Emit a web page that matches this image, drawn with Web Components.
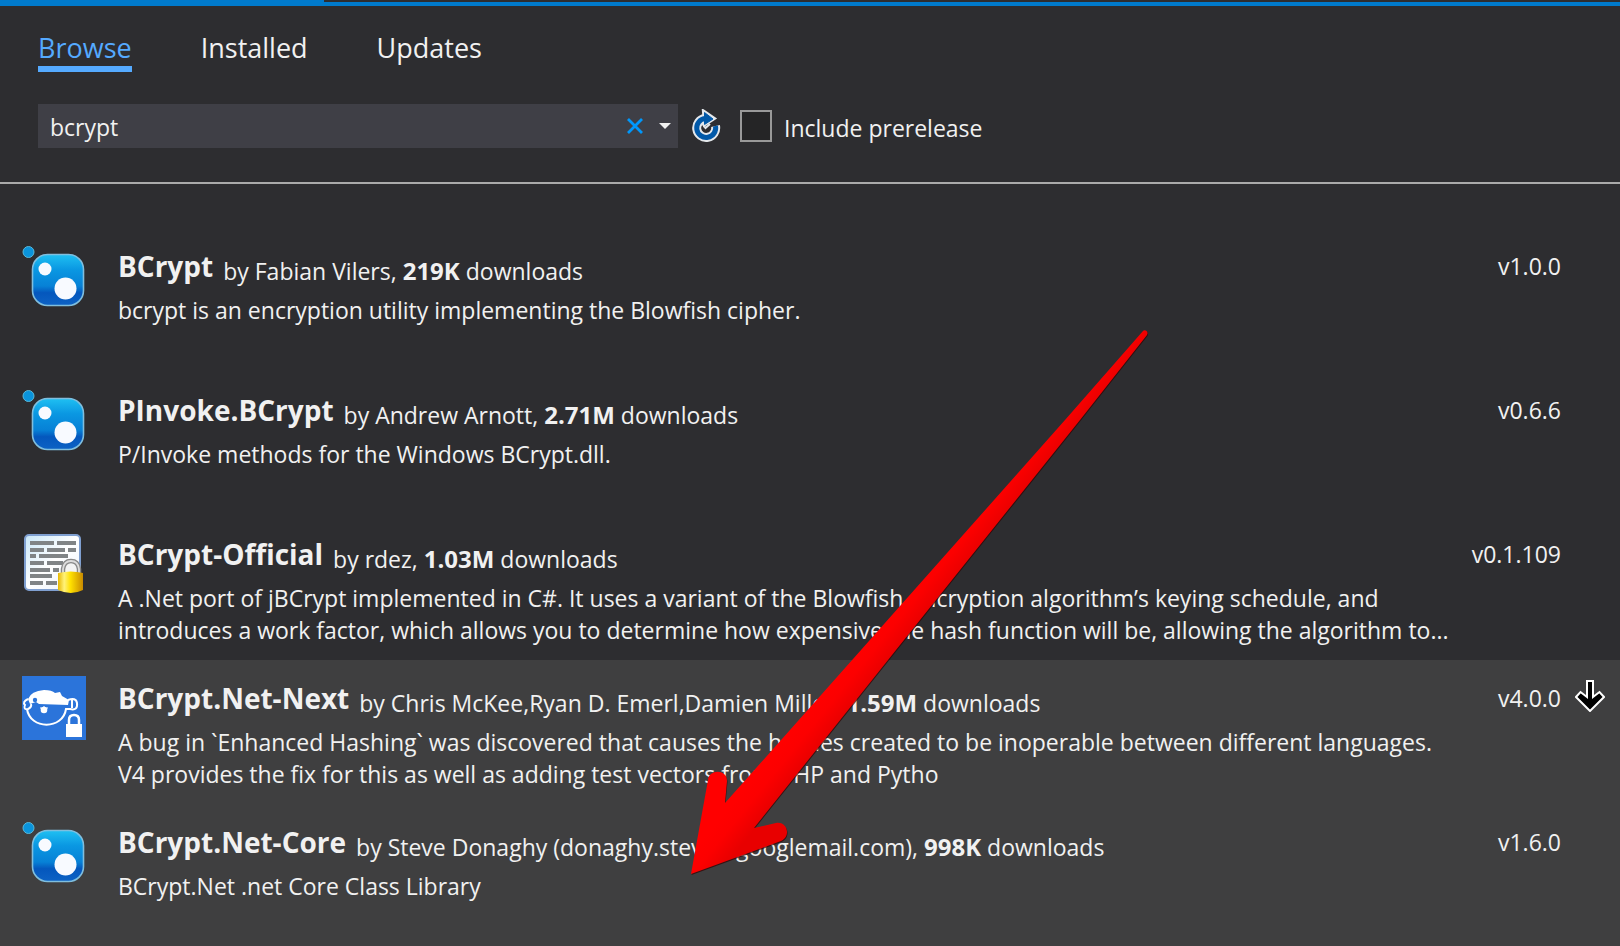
<!DOCTYPE html>
<html lang="en">
<head>
<meta charset="utf-8">
<title>NuGet Package Manager</title>
<style>
html, body { height: 100%; }
body { margin: 0; background: #2d2d30; color: #f1f1f1; font-family: "Open Sans", "Noto Sans", sans-serif; font-size: 23px; overflow: hidden; }
</style>
</head>
<body>
<package-manager></package-manager>
<pointer-arrow></pointer-arrow>
<script>
const define = (name, html, setup) => {
  const template = document.createElement('template');
  template.innerHTML = html;
  customElements.define(name, class extends HTMLElement {
    constructor() {
      super();
      this.attachShadow({ mode: 'open' }).append(template.content.cloneNode(true));
      if (setup) setup(this, this.shadowRoot);
    }
  });
};

define('tab-bar', `
<style>
:host { display: block; }
nav { display: flex; gap: 69px; padding: 24px 38px 0; }
a { color: #f1f1f1; text-decoration: none; font-size: 27px; line-height: 36px; border-bottom: 6px solid transparent; }
a[aria-current] { color: #55aaff; border-color: #55aaff; }
</style>
<nav><a href="#browse" aria-current="page">Browse</a><a href="#installed">Installed</a><a href="#updates">Updates</a></nav>`);

define('search-box', `
<style>
:host { display: flex; align-items: center; width: 640px; height: 44px; background: #3f3f46; }
input { flex: 1; min-width: 0; height: 44px; box-sizing: border-box; border: 0; outline: 0; background: none; color: #f1f1f1; font: inherit; padding: 2px 12px 0; }
button { border: 0; padding: 0; background: none; height: 44px; display: grid; place-items: center; }
.clear { width: 34px; }
.menu { width: 26px; }
</style>
<input type="text" value="bcrypt" aria-label="Search packages">
<button class="clear" aria-label="Clear search"><svg width="16" height="16" viewBox="0 0 16 16"><path d="M1 1 15 15M15 1 1 15" stroke="#0097fb" stroke-width="2.800" fill="none"/></svg></button>
<button class="menu" aria-label="Recent searches"><svg width="12" height="6" viewBox="0 0 12 6"><path d="M0 0H12L6 6Z" fill="#f1f1f1"/></svg></button>`);

define('filter-bar', `
<style>
:host { display: flex; align-items: center; padding: 0 38px; }
.refresh { border: 0; padding: 0; background: none; width: 30px; height: 34px; margin: 0 19px 0 13px; }
svg { display: block; }
input { appearance: none; box-sizing: border-box; width: 32px; height: 32px; margin: 0; border: 2px solid #999; background: #252526; }
label { padding-left: 12px; line-height: 32px; padding-top: 4px; }
</style>
<search-box></search-box>
<button class="refresh" aria-label="Refresh"><svg width="30" height="34" viewBox="0 0 30 34">
<path d="M14 9.500A9.500 9.500 0 1 0 24.500 17" fill="none" stroke="#e4e8ec" stroke-width="9"/>
<path d="M13 3 22.500 9.500 14 15Z" fill="#e4e8ec" stroke="#e4e8ec" stroke-width="4"/>
<path d="M14 9.500A9.500 9.500 0 1 0 24.500 17" fill="none" stroke="#0058a8" stroke-width="5"/>
<path d="M13.500 3.500 22 10 13.500 15.500Z" fill="#0058a8" stroke="#0058a8"/>
<path d="M11.500 15 14.500 19 19 15" fill="none" stroke="#e4e8ec" stroke-width="2"/></svg></button>
<input type="checkbox" id="pre"><label for="pre">Include prerelease</label>`);

define('package-icon', `
<style>:host, svg { display: block; width: 64px; height: 64px; }</style>`, (el, root) => {
  const art = {
    nuget: `<defs><linearGradient id="g" x1="0" y1="0" x2="0" y2="1"><stop offset="0" stop-color="#1fc0f2"/><stop offset=".3" stop-color="#0a97e2"/><stop offset=".62" stop-color="#0781d6"/><stop offset=".75" stop-color="#0457bd"/><stop offset="1" stop-color="#0d62c4"/></linearGradient></defs>
<circle cx="6.500" cy="8" r="5.500" fill="#0a94dc" stroke="#5ab8d8"/>
<rect x="10.500" y="10.500" width="51" height="51" rx="15" fill="url(#g)" stroke="#7fbede" stroke-width="1.600"/>
<circle cx="23" cy="25" r="6.500" fill="#f8faff"/><circle cx="43.500" cy="44.500" r="11" fill="#f8faff"/>`,
    document: `<defs><linearGradient id="p" x1="0" y1="0" x2="1" y2="1"><stop offset="0" stop-color="#c8e6f8"/><stop offset=".5" stop-color="#fff"/><stop offset="1" stop-color="#e8f0fa"/></linearGradient><linearGradient id="l"><stop offset="0" stop-color="#e8b800"/><stop offset=".25" stop-color="#fff27a"/><stop offset=".5" stop-color="#ffe000"/><stop offset="1" stop-color="#c88a00"/></linearGradient></defs>
<rect x="3" y="3" width="55" height="55" rx="4" fill="url(#p)" stroke="#7f9fd0" stroke-width="2"/>
<path d="M8 11H32M35 11H54M8 18H22M25 18H43M46 18H54M8 24H14M17 24H46M8 31H22M25 31H41M8 38H28M31 38H37M8 44H30M8 51H21M24 51H35" stroke="#808486" stroke-width="3.800"/>
<path d="M41 42V37Q42 29 49 29T57 37V42" fill="#f4f4f4" stroke="#888" stroke-width="4.500"/><path d="M41 42V37Q42 29 49 29T57 37V42" fill="none" stroke="#ddd" stroke-width="1.800"/>
<path d="M36 41Q49 38 61 41V58Q49 64 36 58Z" fill="url(#l)"/>`,
    fish: `<path d="M0 0H64V64H0Z" fill="#2b74da"/>
<path d="M6 23Q9 15 22 14Q30 14 33 17L38 16L40 20L47 24L46 29L17 28L14 26L8 28Z" fill="#fff"/>
<circle cx="13" cy="24" r="2.200" fill="#2b74da"/>
<path d="M6 23Q0 26 3 29Q1 34 6 33Q10 31 9 28M5 33C8 54 41 54 44 33L48 33Q56 35 55 27Q54 21 46 24M50 24V32" fill="none" stroke="#fff" stroke-width="2"/>
<path d="M18 32H26M22 30V37" stroke="#fff" stroke-width="1"/><circle cx="22" cy="34" r="3.300" fill="#fff"/>
<path d="M47 49V44Q47 39 52 39T57 44V49" fill="none" stroke="#fff" stroke-width="2.500"/><path d="M44 48H60V61H44Z" fill="#fff"/>`
  };
  root.append(document.createRange().createContextualFragment(`<svg viewBox="0 0 64 64" aria-hidden="true">${art[el.getAttribute('kind')]}</svg>`));
});

define('package-row', `
<style>
:host { display: grid; grid-template-columns: 64px minmax(0, 1fr) 96px 44px; height: 144px; box-sizing: border-box; padding: 16px 15px 0 22px; }
:host([selected]) { background: #3f3f40; }
.text { padding: 2px 12px 0 32px; }
.head { display: flex; align-items: baseline; gap: 10px; padding-bottom: 6px; line-height: 40px; white-space: nowrap; }
h2 { margin: 0; font-size: 28px; line-height: 40px; font-weight: 700; }
.meta { padding-top: 2px; }
.version { line-height: 32px; padding-top: 6px; text-align: right; }
.state { justify-self: end; padding-top: 4px; }
::slotted(p) { margin: 0; line-height: 32px; }
</style>
<slot name="icon"></slot>
<div class="text"><div class="head"><h2><slot name="name"></slot></h2><span class="meta"><slot name="meta"></slot></span></div><slot></slot></div>
<div class="version"><slot name="version"></slot></div>
<div class="state"><slot name="state"></slot></div>`);

define('package-list', `
<style>
:host { display: block; padding-top: 44px; }
button { border: 0; padding: 0; background: none; display: block; }
svg { display: block; }
[slot=meta] { position: relative; top: 3px; }
b { font-size: 24px; line-height: 32px; }
p { margin: 0; line-height: 32px; }
</style>
<package-row><package-icon slot="icon" kind="nuget"></package-icon><span slot="name">BCrypt</span><span slot="meta">by Fabian Vilers, <b>219K</b> downloads</span><p>bcrypt is an encryption utility implementing the Blowfish cipher.</p><span slot="version">v1.0.0</span></package-row>
<package-row><package-icon slot="icon" kind="nuget"></package-icon><span slot="name">PInvoke.BCrypt</span><span slot="meta">by Andrew Arnott, <b>2.71M</b> downloads</span><p>P/Invoke methods for the Windows BCrypt.dll.</p><span slot="version">v0.6.6</span></package-row>
<package-row><package-icon slot="icon" kind="document"></package-icon><span slot="name">BCrypt-Official</span><span slot="meta">by rdez, <b>1.03M</b> downloads</span><p>A .Net port of jBCrypt implemented in C#. It uses a variant of the Blowfish encryption algorithm’s keying schedule, and introduces a work factor, which allows you to determine how expensive the hash function will be, allowing the algorithm to...</p><span slot="version">v0.1.109</span></package-row>
<package-row selected><package-icon slot="icon" kind="fish"></package-icon><span slot="name">BCrypt.Net-Next</span><span slot="meta">by Chris McKee,Ryan D. Emerl,Damien Miller, <b>1.59M</b> downloads</span><p>A bug in \`Enhanced Hashing\` was discovered that causes the hashes created to be inoperable between different languages. V4 provides the fix for this as well as adding test vectors from PHP and Pytho</p><span slot="version">v4.0.0</span><button slot="state" aria-label="Install BCrypt.Net-Next"><svg width="30" height="32" viewBox="0 0 30 32"><path d="M12 1H18V17L24.500 12L29 17L15 31L1 17L5.500 12L12 17Z" fill="#000" stroke="#fff" stroke-width="2"/></svg></button></package-row>
<package-row selected><package-icon slot="icon" kind="nuget"></package-icon><span slot="name">BCrypt.Net-Core</span><span slot="meta">by Steve Donaghy (donaghy.steve@googlemail.com), <b>998K</b> downloads</span><p>BCrypt.Net .net Core Class Library</p><span slot="version">v1.6.0</span></package-row>`);

define('package-manager', `
<style>
:host { display: flex; flex-direction: column; height: 100%; overflow: hidden; }
.strip { border-bottom: 4px solid #007acc; }
.strip div { width: 20%; height: 2px; background: #007acc; }
header { border-bottom: 2px solid #aaa; padding-bottom: 34px; }
filter-bar { margin-top: 32px; }
package-list { flex: 1; min-height: 0; }
</style>
<div class="strip"><div></div></div>
<header><tab-bar></tab-bar><filter-bar></filter-bar></header>
<package-list></package-list>`);

define('pointer-arrow', `
<style>
:host { position: absolute; left: 680px; top: 320px; pointer-events: none; }
svg { display: block; }
</style>
<svg width="480" height="570" viewBox="680 320 480 570" aria-hidden="true">
<defs><linearGradient id="r" gradientUnits="userSpaceOnUse" x1="800" y1="720" x2="826" y2="741"><stop offset="0" stop-color="#f00"/><stop offset=".4" stop-color="#fc0000"/><stop offset="1" stop-color="#e80000"/></linearGradient></defs>
<path d="M691 874 708 780C709 769 727 769 727 781L725 803 861 650 1065 420 1143 331C1145 329 1149 332 1147 335L1080 420 896 650 754 828 776 823C788 821 791 837 781 841Z" transform="translate(.5 1)" fill="#300" opacity=".7"/>
<path d="M691 874 708 780C709 769 727 769 727 781L725 803 861 650 1065 420 1143 331C1145 329 1149 332 1147 335L1080 420 896 650 754 828 776 823C788 821 791 837 781 841Z" fill="url(#r)"/></svg>`);
</script>
</body>
</html>
